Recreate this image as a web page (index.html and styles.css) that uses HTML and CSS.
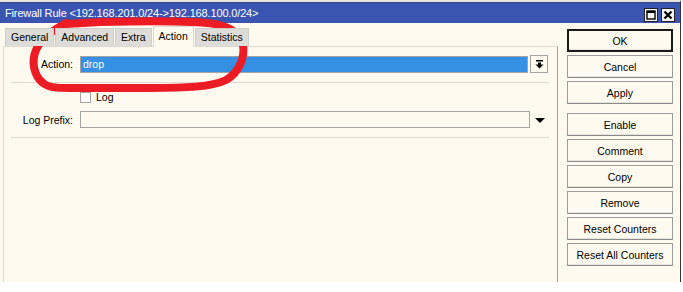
FILE: index.html
```html
<!DOCTYPE html>
<html lang='en'>
<head>
  <meta charset='UTF-8'>
  <title>Firewall Rule</title>
  <link rel="stylesheet" href="styles.css">
</head>
<body>

  <div class="window">
    <div class="titlebar">
      <span class="title">Firewall Rule &lt;192.168.201.0/24-&gt;192.168.100.0/24&gt;</span>
      <div class="title-btns">
        <span class="tbtn">
          <svg width="10" height="10" viewBox="0 0 10 10"><rect x="1" y="1" width="8" height="8" fill="none" stroke="#000" stroke-width="1.4"/><rect x="1" y="1" width="8" height="2" fill="#000"/></svg>
        </span>
        <span class="tbtn">
          <svg width="10" height="10" viewBox="0 0 10 10"><path d="M1.5 1.5 L8.5 8.5 M8.5 1.5 L1.5 8.5" stroke="#000" stroke-width="2.2"/></svg>
        </span>
      </div>
    </div>

    <div class="content">
      <div class="main">
        <div class="tabs">
          <div class="tab">General</div>
          <div class="tab">Advanced</div>
          <div class="tab">Extra</div>
          <div class="tab active">Action</div>
          <div class="tab">Statistics</div>
        </div>

        <div class="panel">
          <div class="row action-row">
            <label class="label">Action:</label>
            <div class="field selected">drop</div>
            <span class="drop-btn">
              <svg width="9" height="9" viewBox="0 0 9 9"><rect x="1" y="0" width="7" height="1.5" fill="#000"/><rect x="3" y="2.5" width="3" height="2.5" fill="#000"/><path d="M0.5 4.5 H8.5 L4.5 8.5 Z" fill="#000"/></svg>
            </span>
          </div>
          <div class="sep"></div>
          <div class="row check-row">
            <span class="checkbox"></span>
            <span>Log</span>
          </div>
          <div class="row prefix-row">
            <label class="label">Log Prefix:</label>
            <div class="field"></div>
            <span class="arrow">
              <svg width="10" height="5" viewBox="0 0 10 5"><path d="M0 0 H10 L5 5 Z" fill="#000"/></svg>
            </span>
          </div>
          <div class="sep"></div>
        </div>
      </div>

      <div class="actions">
        <button class="btn default">OK</button>
        <button class="btn">Cancel</button>
        <button class="btn">Apply</button>
        <button class="btn group">Enable</button>
        <button class="btn">Comment</button>
        <button class="btn">Copy</button>
        <button class="btn">Remove</button>
        <button class="btn">Reset Counters</button>
        <button class="btn">Reset All Counters</button>
      </div>
    </div>

    <!-- red marker drawn over the screenshot -->
    <svg class="marker" width="683" height="292" viewBox="0 0 683 292">
      <path d="M66 23 C54 30 41 38 36 50 C31 62 34 76 43 83 C49 88 58 88 70 88 L150 88 C185 88 212 87 226 80 C240 72 245 56 243 45 C241 34 232 28 215 24 C190 20 140 21 100 22 L66 24"
            fill="none" stroke="#ed1c24" stroke-width="8" stroke-linecap="round" stroke-linejoin="round"/>
    </svg>
  </div>

</body>
</html>
```

FILE: styles.css
```css
:root {
  --cream: #fefaef;
  --title-blue: #3a54b2;
  --field-blue: #3590e3;
  --line: #dedad2;
  --border: #a3a3a3;
}

* {
  box-sizing: border-box;
  margin: 0;
  padding: 0;
}

body {
  background: #fff;
  font-family: 'Liberation Sans', Arial, sans-serif;
  font-size: 10.5px;
  color: #000;
}

.window {
  position: relative;
  width: 681px;
  height: 282px;
  background: var(--cream);
  border-right: 1px solid #333;
  border-top: 2px solid #e6e6e6;
  display: flex;
  flex-direction: column;
}

.titlebar {
  height: 21px;
  background: var(--title-blue);
  border-top: 1px solid #3a4680;
  display: flex;
  align-items: center;
  justify-content: space-between;
  padding: 0 5px 0 5px;
}

.title {
  color: #fff;
  font-size: 11px;
  letter-spacing: -0.15px;
}

.title-btns {
  display: flex;
  gap: 3px;
  margin-top: 3px;
}

.tbtn {
  width: 14px;
  height: 14px;
  background: #f4f4f4;
  border: 1px solid #222;
  display: flex;
  align-items: center;
  justify-content: center;
}

.content {
  flex: 1;
  display: flex;
}

.main {
  width: 558px;
  padding: 3px 0 0 3px;
  display: flex;
  flex-direction: column;
}

.tabs {
  display: flex;
  align-items: flex-end;
  height: 20px;
  padding-left: 2px;
  position: relative;
  z-index: 1;
}

.tab {
  height: 18px;
  line-height: 17px;
  padding: 0 5px;
  margin-right: 1px;
  background: #dedcd8;
  border: 1px solid #cfcdc8;
  border-bottom: none;
}

.tab.active {
  height: 21px;
  margin-bottom: -1px;
  line-height: 18px;
  background: var(--cream);
  border-color: var(--line);
}

.panel {
  flex: 1;
  border-top: 1px solid var(--line);
  border-left: 1px solid var(--line);
  border-right: 1px solid var(--border);
}

.row {
  display: flex;
  align-items: center;
}

.label {
  width: 69px;
  margin-right: 7px;
  text-align: right;
}

.field {
  height: 17px;
  width: 450px;
  border: 1px solid var(--border);
  padding-left: 2px;
  line-height: 15px;
}

.field.selected {
  width: 448px;
  background: var(--field-blue);
  color: #fff;
}

.action-row {
  margin-top: 8px;
}

.drop-btn {
  width: 18px;
  height: 18px;
  margin-left: 2px;
  border: 1px solid var(--border);
  display: flex;
  align-items: center;
  justify-content: center;
}

.sep {
  height: 1px;
  background: var(--line);
  margin: 9px 8px 0 7px;
}

.check-row {
  margin-top: 8px;
  height: 12px;
  padding-left: 76px;
  gap: 5px;
}

.checkbox {
  width: 11px;
  height: 11px;
  border: 1px solid var(--border);
  background: #fffdf8;
}

.prefix-row {
  margin-top: 8px;
}

.prefix-row .field {
  width: 450px;
}

.arrow {
  margin-left: 5px;
  display: flex;
  margin-top: 1px;
}

.actions {
  width: 106px;
  margin-left: 9px;
  padding-top: 6px;
  display: flex;
  flex-direction: column;
  gap: 3px;
}

.btn {
  height: 23px;
  background: var(--cream);
  border: 1px solid #9c9c9c;
  border-bottom-color: #8a8a8a;
  box-shadow: inset 0 -1px 0 #e8e4dc;
  font-family: inherit;
  font-size: 10.5px;
  color: #000;
}

.btn.default {
  border: 2px solid #1a1a1a;
}

.btn.group {
  margin-top: 6px;
}

.marker {
  position: absolute;
  left: 0;
  top: -2px;
  pointer-events: none;
}
```
